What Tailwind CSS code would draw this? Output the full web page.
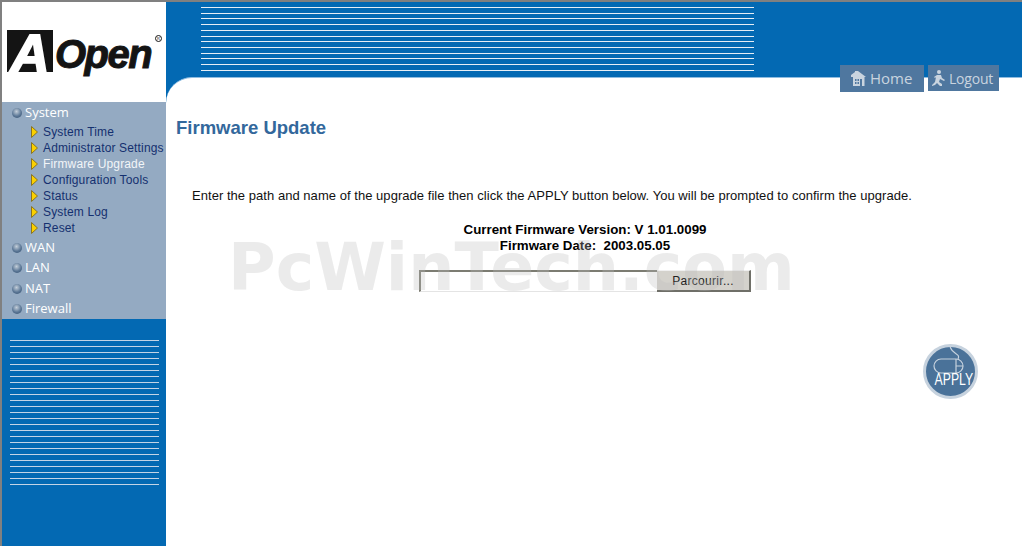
<!DOCTYPE html>
<html lang="en">
<head>
    <meta charset="UTF-8">
    <title>Firmware Update</title>
    <script src="https://cdn.jsdelivr.net/npm/@tailwindcss/browser@4"></script>
</head>
<body class="bg-white">
    <div class="relative w-[1022px] h-[546px] overflow-hidden flex border-t-2 border-l-2 border-[#808080] font-['Liberation_Sans',sans-serif]">
        <!-- left column -->
        <aside class="w-[164px] shrink-0 flex flex-col">
            <div class="h-[100px] bg-white relative shrink-0">
                <div class="absolute left-[5px] top-[28px] w-[46px] h-[42px] bg-[#141414] overflow-hidden flex items-center justify-center">
                    <span class="font-bold italic text-white text-[54px] leading-[42px] [-webkit-text-stroke:2px_white] mt-[3px]">A</span>
                </div>
                <span class="absolute left-[53px] top-[28px] font-bold italic text-[#141414] text-[40px] leading-[48px] tracking-[-1.5px] [-webkit-text-stroke:1px_#141414]">Open</span>
                <span class="absolute left-[153px] top-[33px] w-[7px] h-[7px] rounded-full border border-[#141414] text-[4px] leading-[5px] text-center text-[#141414]">R</span>
            </div>
            <nav class="h-[217px] bg-[#94aac2] shrink-0 flex flex-col font-['Open_Sans',sans-serif] text-[13px] font-medium text-white">
                <div class="h-[21px] flex items-center pl-[10px] gap-[3px]">
                    <span class="w-[10px] h-[10px] rounded-full bg-[radial-gradient(circle_at_45%_35%,#c3ced9,#5b7796_55%,#2f4a68)]"></span>
                    <span class="">System</span>
                </div>
                <ul class="flex flex-col pt-px font-['Liberation_Sans',sans-serif] font-normal text-[12px] tracking-[0.15px] text-[#14306f] pl-[29px]">
                    <li class="h-[16px] flex items-center gap-[5px]"><svg width="7" height="12" viewBox="0 0 7 12"><path d="M.5.5 6.500 6 .5 11.500Z" fill="#fbd000" stroke="#8a7420"/></svg><span class="">System Time</span></li>
                    <li class="h-[16px] flex items-center gap-[5px]"><svg width="7" height="12" viewBox="0 0 7 12"><path d="M.5.5 6.500 6 .5 11.500Z" fill="#fbd000" stroke="#8a7420"/></svg><span class="">Administrator Settings</span></li>
                    <li class="h-[16px] flex items-center gap-[5px]"><svg width="7" height="12" viewBox="0 0 7 12"><path d="M.5.5 6.500 6 .5 11.500Z" fill="#fbd000" stroke="#8a7420"/></svg><span class="text-[#f2f5f8]">Firmware Upgrade</span></li>
                    <li class="h-[16px] flex items-center gap-[5px]"><svg width="7" height="12" viewBox="0 0 7 12"><path d="M.5.5 6.500 6 .5 11.500Z" fill="#fbd000" stroke="#8a7420"/></svg><span class="">Configuration Tools</span></li>
                    <li class="h-[16px] flex items-center gap-[5px]"><svg width="7" height="12" viewBox="0 0 7 12"><path d="M.5.5 6.500 6 .5 11.500Z" fill="#fbd000" stroke="#8a7420"/></svg><span class="">Status</span></li>
                    <li class="h-[16px] flex items-center gap-[5px]"><svg width="7" height="12" viewBox="0 0 7 12"><path d="M.5.5 6.500 6 .5 11.500Z" fill="#fbd000" stroke="#8a7420"/></svg><span class="">System Log</span></li>
                    <li class="h-[16px] flex items-center gap-[5px]"><svg width="7" height="12" viewBox="0 0 7 12"><path d="M.5.5 6.500 6 .5 11.500Z" fill="#fbd000" stroke="#8a7420"/></svg><span class="">Reset</span></li>
                </ul>
                <div class="h-[20px] mt-[2px] flex items-center pl-[10px] gap-[3px]"><span class="w-[10px] h-[10px] rounded-full bg-[radial-gradient(circle_at_45%_35%,#c3ced9,#5b7796_55%,#2f4a68)]"></span><span class="">WAN</span></div>
                <div class="h-[20px] flex items-center pl-[10px] gap-[3px]"><span class="w-[10px] h-[10px] rounded-full bg-[radial-gradient(circle_at_45%_35%,#c3ced9,#5b7796_55%,#2f4a68)]"></span><span class="">LAN</span></div>
                <div class="h-[21px] flex items-center pl-[10px] gap-[3px]"><span class="w-[10px] h-[10px] rounded-full bg-[radial-gradient(circle_at_45%_35%,#c3ced9,#5b7796_55%,#2f4a68)]"></span><span class="">NAT</span></div>
                <div class="h-[20px] flex items-center pl-[10px] gap-[3px]"><span class="w-[10px] h-[10px] rounded-full bg-[radial-gradient(circle_at_45%_35%,#c3ced9,#5b7796_55%,#2f4a68)]"></span><span class="">Firewall</span></div>
            </nav>
            <div class="flex-1 bg-[#0369b3] pt-[21px] pl-[8px]">
                <div class="w-[149px] h-[145px] bg-[repeating-linear-gradient(to_bottom,#c3d4e6_0,#c3d4e6_1px,transparent_1px,transparent_6px)]"></div>
            </div>
        </aside>

        <!-- right column -->
        <main class="flex-1 flex flex-col bg-[#0369b3] relative">
            <header class="h-[75px] shrink-0 relative pt-[5px] pl-[35px]">
                <div class="w-[553px] h-[64px] flex flex-col justify-between">
                    <div class="h-px bg-[#e6eef6]"></div><div class="h-px bg-[#e6eef6]"></div><div class="h-px bg-[#e6eef6]"></div><div class="h-px bg-[#e6eef6]"></div>
                    <div class="h-px bg-[#e6eef6]"></div><div class="h-px bg-[#e6eef6]"></div><div class="h-px bg-[#e6eef6]"></div><div class="h-px bg-[#e6eef6]"></div>
                    <div class="h-px bg-[#e6eef6]"></div><div class="h-px bg-[#e6eef6]"></div><div class="h-px bg-[#e6eef6]"></div><div class="h-px bg-[#e6eef6]"></div>
                </div>
                <div class="absolute z-10 left-[674px] top-[63px] flex gap-[4px] font-['Open_Sans',sans-serif] text-[#c9d4df]">
                    <a class="w-[84px] h-[27px] bg-[#4f779f] flex items-center pl-[10px] gap-[4px] text-[15px]">
                        <svg width="16" height="15" viewBox="0 0 16 15" fill="#c9d4df"><path d="M5 0h3l8 6h-1.500v9H12V8h-2v7H3V6H1V4l4-3Z"/><path d="M5 8h1.500v2H5zM7.500 8H9v2H7.500zM5 11h1.500v2H5zM7.500 11H9v2H7.500z" fill="#4f779f"/></svg>
                        <span class="">Home</span>
                    </a>
                    <a class="w-[71px] h-[26px] bg-[#4f779f] flex items-center pl-[4px] gap-[3px] text-[14px] tracking-[-0.2px]">
                        <svg width="14" height="17" viewBox="0 0 14 17" fill="#c9d4df"><circle cx="7" cy="2" r="2"/><path d="M5 5h4l1 3 3 2-1 1-4-2-1 3 3 2v2H8l-3-3-2 2-3 1v-1l3-3 1-5-1 1-1-1Z"/></svg>
                        <span class="">Logout</span>
                    </a>
                </div>
            </header>
            <section class="flex-1 bg-white rounded-tl-[26px] border-t border-[#8fbce0] pl-[10px]">
                <h1 class="mt-[40px] text-[18.5px] leading-[20px] font-bold text-[#33689c]">Firmware Update</h1>
                <p class="mt-[50px] ml-[16px] text-[13px] leading-[16px] tracking-[0.04px] text-[#111] whitespace-nowrap">Enter the path and name of the upgrade file then click the APPLY button below. You will be prompted to confirm the upgrade.</p>
                <div class="mt-[18px] w-[818px] text-center text-[13.33px] leading-[16px] font-bold text-black">
                    <p class="">Current Firmware Version: V 1.01.0099</p>
                    <p class="">Firmware Date:&nbsp; 2003.05.05</p>
                </div>
                <form class="mt-[16px] ml-[243px] flex">
                    <div class="w-[238px] h-[22px] bg-white border-t-2 border-l-2 border-b border-[#7c7c72] border-b-[#e4e4e4]"></div>
                    <div class="w-[94px] h-[22px] bg-[#d4d2cc] border-r-2 border-b-2 border-[#6f6f68] border-t border-t-[#f0f0f0] text-[12px] leading-[21px] tracking-[0.3px] text-[#222] text-center">Parcourir...</div>
                </form>
            </section>
            <div class="absolute z-10 left-[757px] top-[342px] w-[55px] h-[55px] rounded-full bg-[#4a7299] border-[3px] border-[#c6d2de] overflow-hidden">
                <svg class="absolute left-[3px] top-[-1px]" width="46" height="30" viewBox="0 0 46 30" fill="none" stroke="#c6d2de" stroke-width="1.200">
                    <rect x="5" y="13" width="29" height="14" rx="7"/><path d="M27 13v14M27 20h7M29 13C32 7 22 8 21 0"/>
                </svg>
                <span class="absolute left-[2px] right-0 top-[24px] text-center text-white text-[17px] leading-[18px] scale-x-[.72]">APPLY</span>
            </div>
        </main>

        <!-- watermark, drawn over the page -->
        <div class="absolute left-[226px] top-[233px] z-20 pointer-events-none font-['DejaVu_Sans',sans-serif] font-bold text-[65px] leading-[66px] text-[#bdbdbd]/30 whitespace-nowrap">PcWinTech.com</div>
    </div>
</body>
</html>
